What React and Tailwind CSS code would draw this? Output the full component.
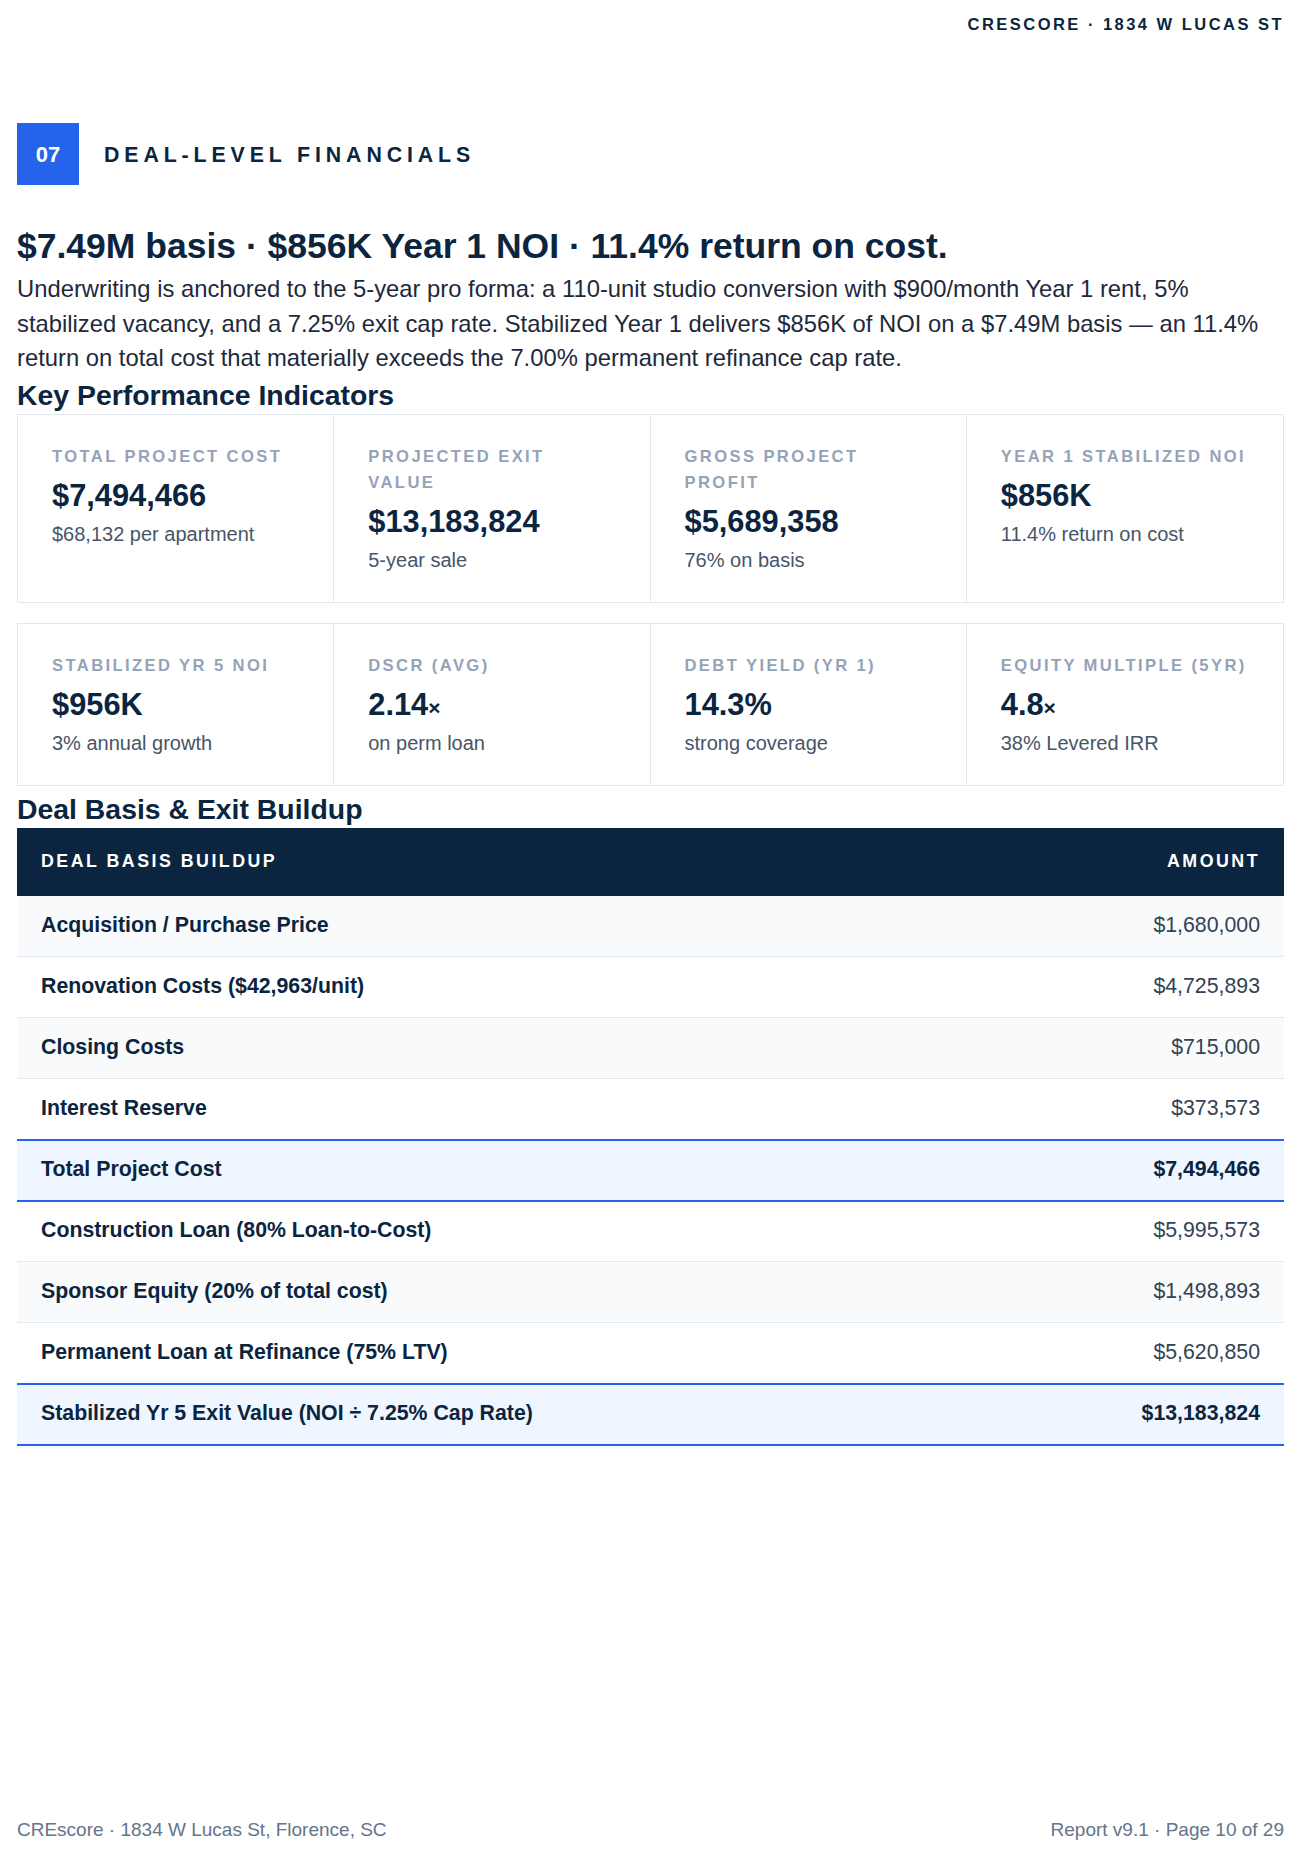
import React from "react";

const kpiTop = [
  { label: "TOTAL PROJECT COST", value: "$7,494,466", sub: "$68,132 per apartment" },
  { label: "PROJECTED EXIT\nVALUE", value: "$13,183,824", sub: "5-year sale" },
  { label: "GROSS PROJECT\nPROFIT", value: "$5,689,358", sub: "76% on basis" },
  { label: "YEAR 1 STABILIZED NOI", value: "$856K", sub: "11.4% return on cost" },
];

const kpiBottom = [
  { label: "STABILIZED YR 5 NOI", value: "$956K", sub: "3% annual growth" },
  { label: "DSCR (AVG)", value: "2.14", suffix: "×", sub: "on perm loan" },
  { label: "DEBT YIELD (YR 1)", value: "14.3%", sub: "strong coverage" },
  { label: "EQUITY MULTIPLE (5YR)", value: "4.8", suffix: "×", sub: "38% Levered IRR" },
];

const rows = [
  { label: "Acquisition / Purchase Price", amount: "$1,680,000" },
  { label: "Renovation Costs ($42,963/unit)", amount: "$4,725,893" },
  { label: "Closing Costs", amount: "$715,000" },
  { label: "Interest Reserve", amount: "$373,573" },
  { label: "Total Project Cost", amount: "$7,494,466", total: true },
  { label: "Construction Loan (80% Loan-to-Cost)", amount: "$5,995,573" },
  { label: "Sponsor Equity (20% of total cost)", amount: "$1,498,893" },
  { label: "Permanent Loan at Refinance (75% LTV)", amount: "$5,620,850" },
  { label: "Stabilized Yr 5 Exit Value (NOI ÷ 7.25% Cap Rate)", amount: "$13,183,824", total: true },
];

function KpiGrid({ items }) {
  return (
    <div className="grid grid-cols-4 border border-[#e2e8f0] divide-x divide-[#e2e8f0]">
      {items.map((item) => (
        <div key={item.label} className="pl-[34px] pr-[20px] pt-[29px] pb-[28px]">
          <p className="text-[16.6px] leading-[26px] font-bold tracking-[0.144em] text-[#94a3b8] whitespace-pre-line">
            {item.label}
          </p>
          <p className="mt-[7px] text-[30.8px] leading-[38px] font-bold text-[#0b2540]">
            {item.value}
            {item.suffix ? <span className="text-[21px] leading-none">{item.suffix}</span> : null}
          </p>
          <p className="mt-[5px] text-[20px] leading-[28px] text-[#475569]">{item.sub}</p>
        </div>
      ))}
    </div>
  );
}

export default function App() {
  return (
    <div className="min-h-[1856px] flex flex-col bg-white pl-[17px] pr-[16px] font-['Liberation_Sans',Arial,sans-serif] text-[#0b2540]">
      <div className="pt-[14px] flex justify-end">
        <p className="text-[16.5px] leading-5 font-bold tracking-[0.15em] text-[#0b2540]">
          CRESCORE · 1834 W LUCAS ST
        </p>
      </div>

      <div className="mt-[89px] flex items-center gap-[25px]">
        <div className="w-[62px] h-[62px] bg-[#2563eb] flex items-center justify-center">
          <span className="text-[22px] font-bold text-white">07</span>
        </div>
        <h2 className="mt-[4px] text-[21.3px] font-bold tracking-[0.23em] text-[#0b2540]">DEAL-LEVEL FINANCIALS</h2>
      </div>

      <h1 className="mt-[40px] text-[35.5px] leading-[42px] font-bold text-[#0b2540]">
        $7.49M basis · $856K Year 1 NOI · 11.4% return on cost.
      </h1>
      <p className="mt-[5px] text-[23.8px] leading-[34.5px] text-[#1e293b]">
        Underwriting is anchored to the 5-year pro forma: a 110-unit studio conversion with $900/month Year 1 rent, 5%
        stabilized vacancy, and a 7.25% exit cap rate. Stabilized Year 1 delivers $856K of NOI on a $7.49M basis — an 11.4%
        return on total cost that materially exceeds the 7.00% permanent refinance cap rate.
      </p>

      <h3 className="mt-[2px] text-[28.4px] leading-[34px] font-bold text-[#0b2540]">Key Performance Indicators</h3>
      <div className="mt-[2px]">
        <KpiGrid items={kpiTop} />
      </div>
      <div className="mt-[20px]">
        <KpiGrid items={kpiBottom} />
      </div>

      <h3 className="mt-[6px] text-[28.4px] leading-[34px] font-bold text-[#0b2540]">Deal Basis &amp; Exit Buildup</h3>
      <table className="mt-[2px] w-full border-collapse">
        <thead>
          <tr className="bg-[#0b2540] text-white">
            <th className="h-[68px] px-[24px] text-left text-[17.8px] font-bold tracking-[0.14em]">DEAL BASIS BUILDUP</th>
            <th className="h-[68px] px-[24px] text-right text-[17.8px] font-bold tracking-[0.14em]">AMOUNT</th>
          </tr>
        </thead>
        <tbody>
          {rows.map((row, idx) => {
            let rowClass = idx % 2 === 0 ? "bg-[#f8fafc] border-b border-[#e2e8f0]" : "bg-white border-b border-[#e2e8f0]";
            if (row.total) {
              rowClass = "bg-[#eff6ff] border-y-2 border-[#2563eb]";
            }
            return (
              <tr key={row.label} className={rowClass}>
                <td className="h-[61px] px-[24px] text-[21.3px] font-bold text-[#0b2540]">{row.label}</td>
                <td
                  className={`h-[61px] px-[24px] text-right text-[21.3px] ${
                    row.total ? "font-bold text-[#0b2540]" : "text-[#334155]"
                  }`}
                >
                  {row.amount}
                </td>
              </tr>
            );
          })}
        </tbody>
      </table>

      <div className="mt-auto pb-[12px] flex justify-between text-[19px] leading-[28px] text-[#64748b]">
        <span>CREscore · 1834 W Lucas St, Florence, SC</span>
        <span>Report v9.1 · Page 10 of 29</span>
      </div>
    </div>
  );
}
